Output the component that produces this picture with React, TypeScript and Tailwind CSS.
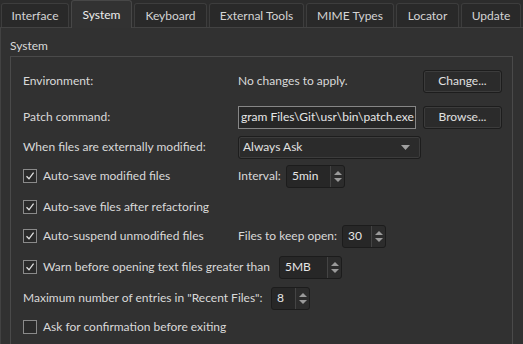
import React from 'react';

const tabs = [
  { label: 'Interface', w: 'w-[68px]' },
  { label: 'System', w: 'w-[61px]', active: true },
  { label: 'Keyboard', w: 'w-[73px]' },
  { label: 'External Tools', w: 'w-[95px]' },
  { label: 'MIME Types', w: 'w-[88px]' },
  { label: 'Locator', w: 'w-[63px]' },
  { label: 'Update', w: 'w-[60px]' },
];

const Check: React.FC<{ checked?: boolean }> = ({ checked }) => (
  <div className="w-[14px] h-[14px] border border-[#8a8a8a] bg-[#2a2a2a] flex items-center justify-center shrink-0">
    {checked && (
      <svg width="10" height="10" viewBox="0 0 10 10">
        <path d="M1.5 5.2 L4 7.8 L8.6 1.6" fill="none" stroke="#e0e0e0" strokeWidth="1.3" />
      </svg>
    )}
  </div>
);

const Spin: React.FC<{ value: string; w: string }> = ({ value, w }) => (
  <div className={`${w} h-[23px] flex rounded-[3px] border border-[#1c1c1c] bg-[#272727]`}>
    <div className="flex-1 flex items-center pl-[5px] text-[#e6e6e6]">{value}</div>
    <div className="w-[14px] border-l border-[#444] flex flex-col items-center justify-center gap-[3px] bg-[#2c2c2c] rounded-r-[3px]">
      <svg width="8" height="4" viewBox="0 0 8 4"><path d="M0 4 L4 0 L8 4Z" fill="#9a9a9a" /></svg>
      <svg width="8" height="4" viewBox="0 0 8 4"><path d="M0 0 L8 0 L4 4Z" fill="#9a9a9a" /></svg>
    </div>
  </div>
);

const Button: React.FC<{ label: string }> = ({ label }) => (
  <div className="w-[79px] h-[23px] rounded-[3px] border border-[#1d1d1d] bg-[#2b2b2b] flex items-center justify-center text-[#e0e0e0] shadow-[inset_0_0_0_1px_#3c3c3c]">
    {label}
  </div>
);

export default function App() {
  return (
    <div className="w-[523px] h-[344px] overflow-hidden bg-[#2c2c2c] text-[12px] text-[#d9d9d9] font-['Lato','Noto_Sans',sans-serif]">
      <div className="flex items-end gap-[2px] h-[27px] pl-[1px]">
        {tabs.map((t) =>
          t.active ? (
            <div
              key={t.label}
              className={`${t.w} h-[28px] -mb-[1px] relative z-10 flex items-center justify-center rounded-t-[3px] border border-b-0 border-[#474747] bg-[#323232] text-[#ededed]`}
            >
              {t.label}
            </div>
          ) : (
            <div
              key={t.label}
              className={`${t.w} h-[24px] flex items-center justify-center rounded-t-[3px] border border-b-0 border-[#3d3d3d] bg-[#292929] text-[#d4d4d4]`}
            >
              {t.label}
            </div>
          )
        )}
      </div>
      <div className="h-[317px] border-t border-l border-[#424242] bg-[#313131] pl-[9px] pr-[10px]">
        <div className="h-[28px] pt-[8px] flex items-center">System</div>
        <div className="h-[300px] border border-[#4a4a4a] pl-[12px] pt-[10px] flex flex-col">
          <div className="h-[28px] flex items-center">
            <div className="w-[215px]">Environment:</div>
            <div className="w-[185px]">No changes to apply.</div>
            <Button label="Change..." />
          </div>
          <div className="h-[28px] flex items-center mt-[8px]">
            <div className="w-[215px]">Patch command:</div>
            <div className="w-[178px] h-[23px] border border-[#868686] bg-[#262626] flex items-center pl-[2px] overflow-hidden whitespace-nowrap text-[#e6e6e6]">
              gram Files\Git\usr\bin\patch.exe
            </div>
            <div className="ml-[7px]"><Button label="Browse..." /></div>
          </div>
          <div className="h-[28px] flex items-center mt-[2px]">
            <div className="w-[215px]">When files are externally modified:</div>
            <div className="w-[183px] h-[23px] rounded-[3px] border border-[#1d1d1d] bg-[#2b2b2b] shadow-[inset_0_0_0_1px_#3c3c3c] flex items-center justify-between pl-[4px] pr-[10px] text-[#e0e0e0]">
              <span>Always Ask</span>
              <svg width="9" height="5" viewBox="0 0 9 5"><path d="M0 0 L9 0 L4.5 5Z" fill="#a0a0a0" /></svg>
            </div>
          </div>
          <div className="h-[28px] flex items-center mt-[1px]">
            <div className="w-[215px] flex items-center gap-[6px]"><Check checked />Auto-save modified files</div>
            <div className="w-[48px]">Interval:</div>
            <Spin value="5min" w="w-[59px]" />
          </div>
          <div className="h-[28px] flex items-center mt-[3px]">
            <div className="flex items-center gap-[6px]"><Check checked />Auto-save files after refactoring</div>
          </div>
          <div className="h-[28px] flex items-center mt-[1px]">
            <div className="w-[215px] flex items-center gap-[6px]"><Check checked />Auto-suspend unmodified files</div>
            <div className="w-[104px]">Files to keep open:</div>
            <Spin value="30" w="w-[44px]" />
          </div>
          <div className="h-[28px] flex items-center mt-[3px]">
            <div className="w-[256px] flex items-center gap-[6px]"><Check checked />Warn before opening text files greater than</div>
            <Spin value="5MB" w="w-[63px]" />
          </div>
          <div className="h-[28px] flex items-center mt-[3px]">
            <div className="w-[248px]">Maximum number of entries in "Recent Files":</div>
            <Spin value="8" w="w-[39px]" />
          </div>
          <div className="h-[28px] flex items-center mt-[1px]">
            <div className="flex items-center gap-[6px]"><Check />Ask for confirmation before exiting</div>
          </div>
        </div>
      </div>
    </div>
  );
}
